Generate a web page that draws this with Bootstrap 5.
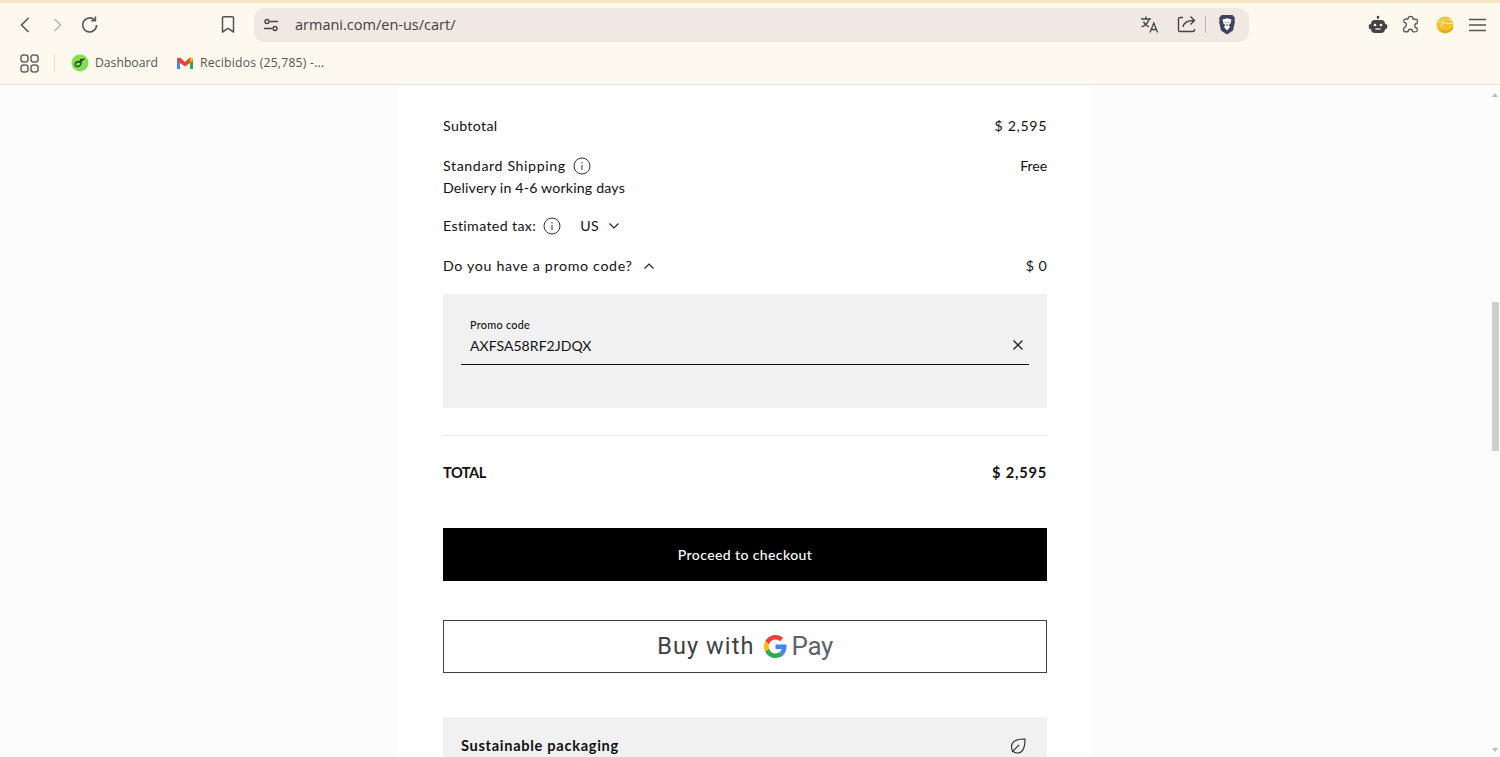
<!DOCTYPE html>
<html lang="en">
<head>
<meta charset="utf-8">
<title>Armani cart</title>
<link href="https://cdn.jsdelivr.net/npm/bootstrap@5.3.0/dist/css/bootstrap.min.css" rel="stylesheet">
<style>
html,body{height:757px;overflow:hidden;background:#fcfcfc}
body{font-family:"Lato","Liberation Sans",sans-serif;color:#111}
.chrome{height:85px;background:#fef9ee;border-top:3px solid #f8e7c0;border-bottom:1px solid #e6e3dc;font-family:"Open Sans","Liberation Sans",sans-serif;color:#444}
.toolrow{height:43px;padding-left:16px;padding-right:14px}
.bookrow{height:34px;padding-left:20px;font-size:12.2px;color:#555}
.navicons{width:238px;height:100%}
.fwdicon{margin-left:17px}
.reloadicon{margin-left:15px}
.markicon{margin-left:auto;margin-right:18px}
.urlbox{width:995px;height:34px;background:#f0e8e2;border-radius:10px;padding:0 13px 0 9px;font-size:14.5px;color:#3f3f3f}
.urltext{margin-left:16px}
.urltools{margin-left:auto}
.shareicon{margin-left:17px}
.extras{margin-left:auto;gap:15px}
.roboticon{margin-right:-2px}
.sepv{width:1px;height:17px;background:#e9dcc0;margin:0 16px 0 15px}
.vsep{width:1px;height:17px;background:#b9b4ac;margin:0 12px 0 8px}
.dashtext{margin-left:6px}
.gmailicon{margin-left:19px}
.gmailtext{margin-left:7px;letter-spacing:.22px}
.pagewrap{height:672px}
.trackbar{width:11px;flex:none}
.thumbbar{position:absolute;right:1px;top:217px;width:7px;height:149px;background:#cfcfcf}
.arrowup{position:absolute;right:2px;top:5px;border:3px solid transparent;border-bottom:4px solid #bbb}
.arrowdown{position:absolute;right:2px;bottom:2px;border:3px solid transparent;border-top:4px solid #bbb}
.sheet{width:693px;background:#fff;padding:0 44px 0 45px;margin:0 auto;font-size:14.2px;letter-spacing:.35px;overflow:hidden}
.linerow{height:22px;line-height:22px}
.gaptop30{margin-top:30px}
.gaptop18{margin-top:18px}
.gaptop16{margin-top:16px}
.ls-ship{letter-spacing:.61px}
.ls-deliv{letter-spacing:.17px}
.ls-promo{letter-spacing:.67px}
.ls-amt{letter-spacing:.63px}
.ls-free{letter-spacing:-.15px}
.infoship{margin-left:7px}
.infotax{margin-left:7px}
.taxcountry{margin-left:19px}
.chevdown{margin-left:9px}
.chevup{margin-left:10px}
.promoarea{height:114px;background:#f1f1f1;padding:24px 18px 0 18px;margin-top:17px}
.promolabel{font-size:10.8px;line-height:14px;padding-left:9px;letter-spacing:.3px;font-weight:500}
.promofield{height:33px;border-bottom:1px solid #111;padding:0 5px 6px 9px;font-size:14px;letter-spacing:.06px}
.divline{height:1px;background:#e8e8e8;margin-top:27px}
.totalrow{margin-top:26px;font-weight:700;font-size:14.6px;height:22px;line-height:22px}
.ls-total{letter-spacing:-.5px}
.ls-totalamt{letter-spacing:.8px}
.checkoutbtn{height:53px;width:100%;margin-top:44px;background:#000;color:#fff;border:0;border-radius:0;font-size:14px;letter-spacing:.4px;font-weight:500}
.checkoutbtn:hover{background:#000;color:#fff}
.gpaybtn{height:53px;margin-top:39px;border:1px solid #3c4043;background:#fff;font-family:"Roboto","Liberation Sans",sans-serif;color:#3c4043;font-size:23.5px;letter-spacing:1.1px;font-weight:400;gap:9px}
.gpaymark{gap:5px}
.gpayword{color:#5f6368;font-weight:400;font-size:26px;letter-spacing:-.4px}
.packbox{margin-top:44px;height:70px;background:#f1f1f1;padding:18px 20px 0 18px;font-weight:700;font-size:14.6px;letter-spacing:.7px}
.leaficon{margin-top:2px}
</style>
</head>
<body>
<header class="chrome">
  <div class="toolrow d-flex align-items-center">
    <div class="navicons d-flex align-items-center">
      <svg width="18" height="18" viewBox="0 0 18 18" fill="none" stroke="#555" stroke-width="1.6"><path d="M12.5 2 5.5 9l7 7"/></svg>
      <svg class="fwdicon" width="14" height="18" viewBox="0 0 14 18" fill="none" stroke="#b8b5ae" stroke-width="1.5"><path d="M3.5 3l6 6-6 6"/></svg>
      <svg class="reloadicon" width="20" height="20" viewBox="0 0 20 20" fill="none" stroke="#555" stroke-width="1.6"><path d="M16.6 10a7 7 0 1 1-2-5"/><path d="M15.4 1.6v4.2h-4.2" stroke-linejoin="round"/></svg>
      <svg class="markicon" width="16" height="19" viewBox="0 0 16 19" fill="none" stroke="#555" stroke-width="1.5"><path d="M2.5 2.7c0-.6.5-1 1-1h9c.6 0 1 .4 1 1V17L8 13.4 2.5 17z" stroke-linejoin="round"/></svg>
    </div>
    <div class="urlbox d-flex align-items-center">
      <svg width="16" height="14" viewBox="0 0 16 14" fill="none" stroke="#444" stroke-width="1.4"><circle cx="4" cy="3.5" r="2"/><path d="M7 3.5h8M1 10.5h8"/><circle cx="12" cy="10.5" r="2"/></svg>
      <span class="urltext">armani.com/en-us/cart/</span>
      <div class="urltools d-flex align-items-center">
        <svg width="20" height="19" viewBox="0 0 20 19" fill="none" stroke="#444" stroke-width="1.3"><path d="M1 4h10M6 1.5V4M9 4c-.8 3.5-3.5 6.500-7.500 8M3.500 6.500c1 2.500 3 4.500 5.500 5.500"/><path d="M10 17.500l3.800-9.500 3.800 9.500M11.300 14.500h5"/></svg>
        <svg class="shareicon" width="20" height="19" viewBox="0 0 20 19" fill="none" stroke="#444" stroke-width="1.4"><path d="M6 2.500H3a1.500 1.500 0 0 0-1.500 1.500v11A1.500 1.500 0 0 0 3 16.500h13a1.500 1.500 0 0 0 1.500-1.500v-1"/><path d="M6 12c.6-3.800 4-6.500 11-6.500M13.500 1.500l4 4-4 4"/></svg>
        <span class="vsep"></span>
        <svg width="18" height="21" viewBox="0 0 18 21"><path d="M3.500 1h11L17 4l-.6 2.600.6 1-2 9L9 20.500 3 16.600l-2-9 .6-1L1 4z" fill="#3d4360"/><path d="M4.500 5.500 9 4.200l4.500 1.300-1 4-1.800 1.500L12 13l-3 3.500L6 13l1.300-2L5.500 9.500z" fill="#fff"/><path d="M7.500 8.500h.9M9.700 8.500h.9M9 10v2" stroke="#3d4360" stroke-width="1"/></svg>
      </div>
    </div>
    <div class="extras d-flex align-items-center">
      <svg class="roboticon" width="20" height="20" viewBox="0 0 20 20"><path d="M10 1v3" stroke="#444" stroke-width="1.500"/><circle cx="10" cy="2" r="1.300" fill="#444"/><rect x="3" y="5" width="14" height="13" rx="4" fill="#444"/><rect x="0.800" y="9" width="3" height="5" rx="1.500" fill="#444"/><rect x="16.200" y="9" width="3" height="5" rx="1.500" fill="#444"/><circle cx="7" cy="10" r="1.300" fill="#fef9ee"/><circle cx="13" cy="10" r="1.300" fill="#fef9ee"/><path d="M7.500 14h5" stroke="#fef9ee" stroke-width="1.300"/></svg>
      <svg width="20" height="20" viewBox="0 0 20 20" fill="none" stroke="#555" stroke-width="1.300"><path d="M7 4c0-3.500 5-3.500 5 0 .1.500 3.700 0 4 .5.600 1 .3 3.500 0 4-3 0-3 4.500 0 4.500.500 1 .3 3-.4 3.500-1.500.5-3.500.3-4 0 0-3-4.500-3-4.500 0-1.500.4-3 .3-4-.2-.6-.8-.5-3 0-4 3 0 3-5 0-5-.4-.8-.3-2.500.3-3 1.500-.5 3.400-.2 3.600-.3z" stroke-linejoin="round"/></svg>
      <svg width="18" height="18" viewBox="0 0 18 18"><circle cx="9" cy="9" r="8.500" fill="#f0c22e"/><path d="M3 13c4 2.500 10 2.500 14-2v2a8.500 8.500 0 0 1-14 .5z" fill="#dda81e"/><path d="M2 5.500c4 .5 9 2.500 14.500 2M7 2c1 3-1 7-3 9M11 3c2 0 4 1 5 3" stroke="#fdf0b0" stroke-width="1" fill="none"/></svg>
      <svg width="17" height="14" viewBox="0 0 17 14" stroke="#555" stroke-width="1.400"><path d="M0 1.500h17M0 7h17M0 12.500h17"/></svg>
    </div>
  </div>
  <div class="bookrow d-flex align-items-center">
    <svg width="19" height="19" viewBox="0 0 19 19" fill="none" stroke="#666" stroke-width="1.500"><rect x="1" y="1" width="7" height="7" rx="2.500"/><rect x="11" y="1" width="7" height="7" rx="2.500"/><rect x="1" y="11" width="7" height="7" rx="2.500"/><rect x="11" y="11" width="7" height="7" rx="2.500"/></svg>
    <span class="sepv"></span>
    <svg width="18" height="18" viewBox="0 0 18 18"><circle cx="9" cy="9" r="8.500" fill="#7fe04f"/><path d="M4 11c0-2.500 3-3.500 5.500-3.500 1.200 1.500 0 5-2.500 5S4.500 12 4 11zM8.500 8.500l5-4M9 5.500l3 .5" stroke="#2c3a2a" stroke-width="1.300" fill="none"/></svg>
    <span class="dashtext">Dashboard</span>
    <svg class="gmailicon" width="16" height="12" viewBox="0 0 16 12"><path d="M0 2.500V12h3V5z" fill="#4285f4"/><path d="M13 5v7h3V2.500z" fill="#34a853"/><path d="M0 1.500 3 .5 8 5l5-4.500 3 1v1L13 6 8 9.500 3 6 0 3.500z" fill="#ea4335"/><path d="M13 .5l3 1v1.500L13 6z" fill="#fbbc04"/></svg>
    <span class="gmailtext">Recibidos (25,785) -...</span>
  </div>
</header>
<div class="pagewrap d-flex position-relative">
  <main class="flex-grow-1">
    <div class="sheet h-100">
      <div class="linerow gaptop30 d-flex justify-content-between"><span>Subtotal</span><span class="ls-amt">$ 2,595</span></div>
      <div class="linerow gaptop18 d-flex justify-content-between"><span class="d-flex align-items-center ls-ship">Standard Shipping<svg class="infoship" width="18" height="18" viewBox="0 0 18 18" fill="none" stroke="#333"><circle cx="9" cy="9" r="8"/><path d="M9 8v5M9 5v1.500"/></svg></span><span class="ls-free">Free</span></div>
      <div class="linerow ls-deliv">Delivery in 4-6 working days</div>
      <div class="linerow gaptop16 d-flex align-items-center"><span>Estimated tax:</span><svg class="infotax" width="18" height="18" viewBox="0 0 18 18" fill="none" stroke="#333"><circle cx="9" cy="9" r="8"/><path d="M9 8v5M9 5v1.500"/></svg><span class="taxcountry">US</span><svg class="chevdown" width="12" height="8" viewBox="0 0 12 8" fill="none" stroke="#222" stroke-width="1.200"><path d="M1.500 1.500 6 6l4.500-4.500"/></svg></div>
      <div class="linerow gaptop18 d-flex justify-content-between align-items-center"><span class="d-flex align-items-center ls-promo">Do you have a promo code?<svg class="chevup" width="12" height="8" viewBox="0 0 12 8" fill="none" stroke="#222" stroke-width="1.200"><path d="M1.500 6.500 6 2l4.500 4.500"/></svg></span><span>$ 0</span></div>
      <div class="promoarea">
        <div class="promolabel">Promo code</div>
        <div class="promofield d-flex justify-content-between align-items-center"><span>AXFSA58RF2JDQX</span><svg width="12" height="12" viewBox="0 0 12 12" stroke="#222" stroke-width="1.300"><path d="M1.500 1.500l9 9M10.500 1.500l-9 9"/></svg></div>
      </div>
      <div class="divline"></div>
      <div class="totalrow d-flex justify-content-between"><span class="ls-total">TOTAL</span><span class="ls-totalamt">$ 2,595</span></div>
      <button type="button" class="btn checkoutbtn">Proceed to checkout</button>
      <div class="gpaybtn d-flex justify-content-center align-items-center">
        <span>Buy with</span>
        <span class="gpaymark d-flex align-items-center">
          <svg width="23" height="23" viewBox="0 0 48 48"><path fill="#EA4335" d="M24 9.500c3.500 0 6.700 1.300 9.200 3.500l6.900-6.900C35.900 2.400 30.300 0 24 0 14.600 0 6.500 5.400 2.600 13.200l8 6.200C12.400 13.700 17.700 9.500 24 9.500z"/><path fill="#4285F4" d="M47 24.500c0-1.600-.1-3.100-.4-4.500H24v9h12.900c-.6 3-2.300 5.500-4.800 7.200l7.700 6C44.300 38 47 31.800 47 24.500z"/><path fill="#FBBC05" d="M10.500 28.600c-.5-1.400-.8-3-.8-4.600s.3-3.200.8-4.600l-8-6.200C.9 16.500 0 20.100 0 24s.9 7.500 2.600 10.800z"/><path fill="#34A853" d="M24 48c6.500 0 11.900-2.100 15.900-5.800l-7.700-6c-2.200 1.400-4.900 2.300-8.200 2.300-6.300 0-11.600-4.200-13.500-9.900l-8 6.200C6.500 42.600 14.600 48 24 48z"/></svg>
          <span class="gpayword">Pay</span>
        </span>
      </div>
      <div class="packbox d-flex justify-content-between align-items-start"><span>Sustainable packaging</span><svg class="leaficon" width="18" height="18" viewBox="0 0 18 18" fill="none" stroke="#333" stroke-width="1.200"><path d="M16 2C8 2 2.500 4 2.500 10c0 4 3 6 6 6 5 0 7.500-5 7.500-14z"/><path d="M3 15 10 8"/></svg></div>
    </div>
  </main>
  <aside class="trackbar"></aside>
  <div class="arrowup"></div>
  <div class="thumbbar"></div>
  <div class="arrowdown"></div>
</div>
</body>
</html>
